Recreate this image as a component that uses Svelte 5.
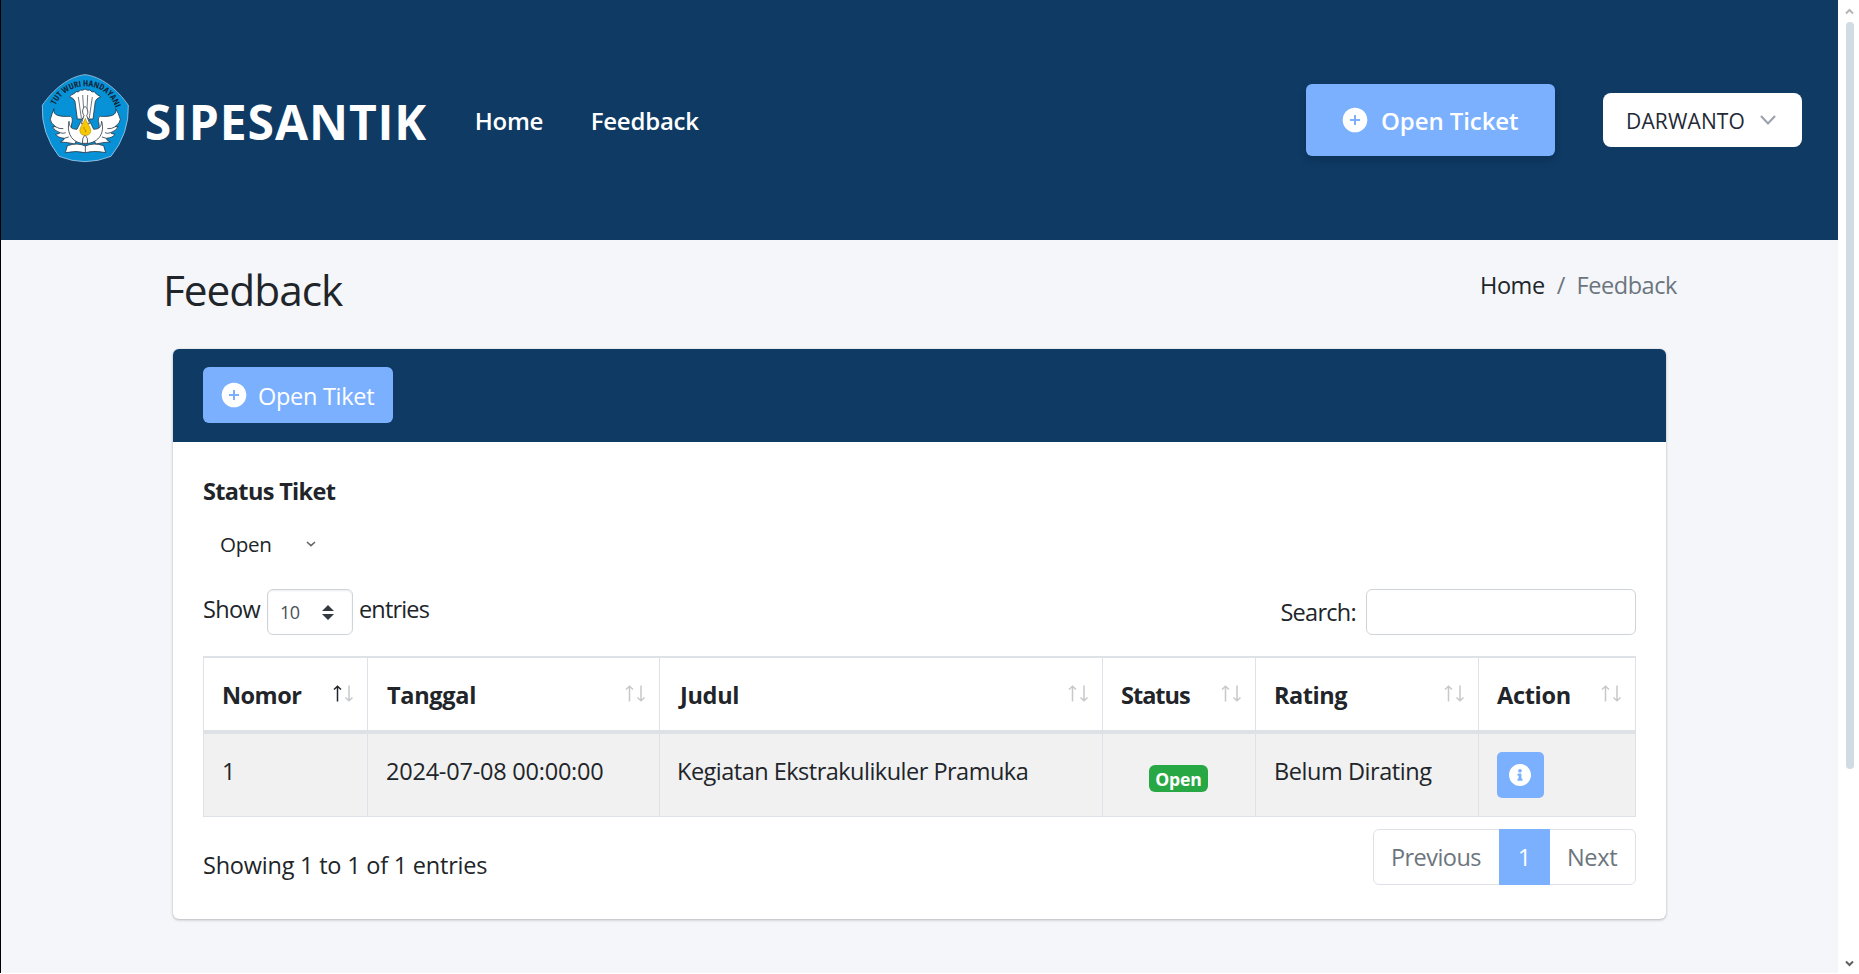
<script>
  const columns = [
    { key: 'nomor', label: 'Nomor' },
    { key: 'tanggal', label: 'Tanggal' },
    { key: 'judul', label: 'Judul' },
    { key: 'status', label: 'Status' },
    { key: 'rating', label: 'Rating' },
    { key: 'action', label: 'Action' }
  ];
  const rows = [
    {
      nomor: '1',
      tanggal: '2024-07-08 00:00:00',
      judul: 'Kegiatan Ekstrakulikuler Pramuka',
      status: 'Open',
      rating: 'Belum Dirating'
    }
  ];
  let sorted = $state('nomor');
</script>

{#snippet plus()}
  <svg class="plus" viewBox="0 0 26 26" aria-hidden="true">
    <circle cx="13" cy="13" r="12.3" fill="#fff" />
    <path d="M13 8v10M8 13h10" stroke="#7bb0ff" stroke-width="2" />
  </svg>
{/snippet}

<div class="window">
  <div class="page">
    <nav class="navbar">
      <svg class="logo" viewBox="120 68 272 272" aria-hidden="true">
        <path
          d="M255 73C302 78 352 116 385 165Q388 250 333 318Q255 350 177 318Q123 250 127 165C160 116 208 78 255 73Z"
          fill="#0792d8" stroke="#a4c8e4" stroke-width="2.5" />
        <path id="arc" d="M167 165C184 127 218 108 258 108C300 108 331 132 346 170" fill="none" />
        <text class="motto"><textPath href="#arc" textLength="232" lengthAdjust="spacingAndGlyphs">TUT WURI HANDAYANI</textPath></text>
        <g fill="#fff" stroke="#27343f" stroke-width="2.4" stroke-linejoin="round">
          <path d="M209 139C216 130 224 132 228 124Q236 128 241 119Q248 122 255 116Q262 122 270 119Q275 128 283 124Q287 132 302 139Q288 145 286 153L279 206H232L225 153Q222 144 209 139Z" />
          <path d="M235 140L244 203M248 134L251 178M263 134L261 178M277 140L268 203" fill="none" stroke-width="2" />
          <path d="M162 175C157 197 180 199 211 198Q219 200 217 213C210 231 218 253 233 265L224 281Q205 276 181 275Q194 269 193 264Q173 262 167 252Q180 250 180 247Q160 240 158 229L167 229Q151 218 151 207Q156 189 162 175Z" />
          <path d="M347 175C352 197 330 199 301 198Q293 200 295 213C302 231 294 253 279 265L288 281Q307 276 331 275Q318 269 319 264Q339 262 345 252Q332 250 332 247Q352 240 354 229L345 229Q361 218 361 207Q356 189 347 175Z" />
          <path d="M207 213C201 239 208 272 244 279Q255 283 266 279C304 272 313 239 305 213C303 233 297 236 281 237L265 204H247L231 237C215 236 209 233 207 213Z" />
          <path d="M166 229Q176 236 190 235M180 247Q190 251 197 247M193 264L206 260M346 229Q336 236 322 235M332 247Q322 251 315 247M319 264L306 260" fill="none" />
          <path d="M255 168C246 176 246 188 252 195L244 220H269L260 195C266 188 264 176 255 168Z" />
          <path d="M247 279Q246 263 255 253Q265 263 263 279Z" />
          <path d="M202 286Q232 276 256 287Q281 276 311 286L317 307Q283 300 256 307Q229 300 196 307ZM256 287V307" />
        </g>
        <path d="M256 204C250 221 237 233 240 244C243 259 270 259 272 244C274 233 262 221 256 204Z" fill="#f9c800" stroke="#a58a18" stroke-width="1.8" />
        <path d="M252 230C250 239 260 236 256 246" fill="none" stroke="#7d6818" stroke-width="2" />
      </svg>
      <a class="brand" href="#home">SIPESANTIK</a>
      <div class="links">
        <a href="#home">Home</a>
        <a href="#feedback">Feedback</a>
      </div>
      <button class="ticket">{@render plus()}<span>Open Ticket</span></button>
      <button class="user">
        <span>DARWANTO</span>
        <svg viewBox="0 0 18 12" aria-hidden="true"><path d="M2 2l7 7.5L16 2" /></svg>
      </button>
    </nav>

    <header class="heading">
      <h1>Feedback</h1>
      <div class="crumbs">
        <a href="#home">Home</a><i>/</i><span>Feedback</span>
      </div>
    </header>

    <section class="card">
      <div class="card-top">
        <button class="new">{@render plus()}<span>Open Tiket</span></button>
      </div>
      <div class="card-body">
        <b class="filter-label">Status Tiket</b>
        <div class="filter">
          <span>Open</span>
          <svg viewBox="0 0 10 6" aria-hidden="true"><path d="M1 1l4 3.6L9 1" /></svg>
        </div>

        <div class="controls">
          <div class="length">
            <span class="show">Show</span>
            <div class="select">
              <span>10</span>
              <svg viewBox="0 0 12 15" aria-hidden="true"><path d="M6 0l6 6H0zM6 15l6-6H0z" /></svg>
            </div>
            <span class="entries">entries</span>
          </div>
          <label class="search"><span>Search:</span><input type="text" /></label>
        </div>

        <table>
          <thead>
            <tr>
              {#each columns as col}
                <th class={col.key} onclick={() => (sorted = col.key)}>
                  <span>{col.label}</span>
                  <svg class="sort" class:asc={sorted === col.key} viewBox="0 0 20 17" aria-hidden="true">
                    <path class="up" d="M4.5 16.5V1.5M1 4.5L4.5 1.2L8 4.5" />
                    <path d="M16 .5V15.5M12.5 12.5L16 15.8L19.5 12.5" />
                  </svg>
                </th>
              {/each}
            </tr>
          </thead>
          <tbody>
            {#each rows as row}
              <tr>
                <td class="nomor">{row.nomor}</td>
                <td class="tanggal">{row.tanggal}</td>
                <td class="judul">{row.judul}</td>
                <td class="status"><span class="badge">{row.status}</span></td>
                <td class="rating">{row.rating}</td>
                <td class="action">
                  <button class="info" aria-label="Detail">
                    <svg viewBox="8 8 496 496" aria-hidden="true">
                      <path d="M256 8C119.043 8 8 119.083 8 256c0 136.997 111.043 248 248 248s248-111.003 248-248C504 119.083 392.957 8 256 8zm0 110c23.196 0 42 18.804 42 42s-18.804 42-42 42-42-18.804-42-42 18.804-42 42-42zm56 254c0 6.627-5.373 12-12 12h-88c-6.627 0-12-5.373-12-12v-24c0-6.627 5.373-12 12-12h12v-64h-12c-6.627 0-12-5.373-12-12v-24c0-6.627 5.373-12 12-12h64c6.627 0 12 5.373 12 12v100h12c6.627 0 12 5.373 12 12v24z" />
                    </svg>
                  </button>
                </td>
              </tr>
            {/each}
          </tbody>
        </table>

        <div class="footer">
          <span class="summary">Showing 1 to 1 of 1 entries</span>
          <div class="pages">
            <span class="prev">Previous</span>
            <span class="current">1</span>
            <span class="next">Next</span>
          </div>
        </div>
      </div>
    </section>
  </div>

  <div class="scrollbar">
    <svg viewBox="0 0 9 7" aria-hidden="true"><path d="M1 5.5L4.5 2L8 5.5" stroke="#b5b5b5" /></svg>
    <div class="thumb"></div>
    <svg class="down" viewBox="0 0 9 7" aria-hidden="true"><path d="M1 1.5L4.5 5L8 1.5" stroke="#606060" /></svg>
  </div>
</div>

<style>
  :global(body) {
    margin: 0;
    background: #fff;
    overflow: hidden;
  }
  * {
    box-sizing: border-box;
  }
  .window {
    display: flex;
    width: 1859px;
    height: 973px;
    border-left: 1px solid #000;
    font: 400 23.5px/36px 'Open Sans', 'Noto Sans', sans-serif;
    color: #212529;
    white-space: nowrap;
  }
  .page {
    width: 1837px;
    background: #f4f6fa;
  }
  a {
    color: inherit;
    text-decoration: none;
  }
  button {
    display: flex;
    align-items: center;
    border: 0;
    padding: 0;
    font: inherit;
    color: #fff;
    background: #7bb0ff;
  }
  svg {
    display: block;
    flex: none;
  }

  .navbar {
    display: flex;
    align-items: center;
    height: 240px;
    padding: 0 36px 0 39px;
    background: #0e3a64;
    color: #fff;
    font-size: 24px;
    font-weight: 600;
  }
  .logo {
    width: 90.67px;
    height: 90.67px;
    margin-bottom: 4px;
  }
  .motto {
    font: 700 25px 'Open Sans', sans-serif;
    font-stretch: 75%;
    fill: #10283c;
  }
  .brand {
    margin: 4px 0 0 14px;
    width: 330px;
    font-size: 48px;
    line-height: 64px;
    font-weight: 700;
    letter-spacing: 0.9px;
  }
  .links {
    display: flex;
    gap: 47.5px;
    padding-top: 2px;
    flex: 1;
    letter-spacing: -0.22px;
  }
  .ticket {
    width: 249px;
    height: 72px;
    padding-left: 36px;
    border-radius: 6px;
    box-shadow: 0 4px 8px rgba(0, 0, 0, 0.16);
    letter-spacing: -0.08px;
  }
  .plus {
    width: 26px;
    height: 26px;
  }
  .ticket span {
    margin: 2px 0 0 13px;
  }
  .user {
    width: 199px;
    height: 54px;
    margin-left: 48px;
    padding-left: 23px;
    border-radius: 8px;
    background: #fff;
    color: #1f2937;
    font-size: 21px;
    font-weight: 400;
    letter-spacing: 0.15px;
  }
  .user span {
    margin-top: 2px;
  }
  .user svg {
    width: 18px;
    height: 12px;
    margin: 0 0 0 14px;
  }
  .user path {
    fill: none;
    stroke: #9ca3af;
    stroke-width: 2.2;
  }

  .heading {
    display: flex;
    justify-content: space-between;
    height: 109px;
    padding: 24px 161px 0 162px;
  }
  h1 {
    margin: 0;
    font-size: 42.4px;
    line-height: 52px;
    font-weight: 400;
    letter-spacing: -1.04px;
  }
  .crumbs {
    display: flex;
    padding-top: 3px;
    letter-spacing: -0.42px;
    color: #6c757d;
  }
  .crumbs a {
    color: #212529;
  }
  .crumbs i {
    margin: 0 11.5px 0 12px;
    font-style: normal;
  }

  .card {
    width: 1493px;
    height: 570px;
    margin-left: 172px;
    border-radius: 6px;
    background: #fff;
    box-shadow: 0 0 1px rgba(0, 0, 0, 0.125), 0 1px 3px rgba(0, 0, 0, 0.25);
  }
  .card-top {
    height: 93px;
    padding: 18px 30px;
    border-radius: 6px 6px 0 0;
    background: #0e3a64;
  }
  .new {
    width: 190px;
    height: 56px;
    padding-left: 18px;
    border-radius: 6px;
    letter-spacing: -0.29px;
  }
  .new span {
    margin: 2px 0 0 11px;
  }
  .card-body {
    padding: 31px 30px 0;
  }
  .filter-label {
    display: block;
    letter-spacing: -0.66px;
  }
  .filter {
    display: flex;
    align-items: center;
    height: 36px;
    margin-top: 17px;
    padding-left: 17px;
    font-size: 20.6px;
    letter-spacing: -0.34px;
  }
  .filter span {
    width: 86px;
  }
  .filter svg {
    width: 10px;
    height: 6px;
  }
  .filter path {
    fill: none;
    stroke: #666;
    stroke-width: 1.6;
  }

  .controls {
    display: flex;
    justify-content: space-between;
    height: 46px;
    margin-top: 27px;
  }
  .length {
    display: flex;
  }
  .show {
    width: 64px;
    margin-top: 2px;
    letter-spacing: -0.67px;
  }
  .select {
    display: flex;
    align-items: center;
    width: 86px;
    height: 46px;
    padding-left: 12px;
    border: 1px solid #ced4da;
    border-radius: 6px;
    box-shadow: inset 0 1px 2px rgba(0, 0, 0, 0.075);
    font-size: 18px;
    letter-spacing: -0.6px;
    color: #495057;
  }
  .select span {
    width: 42px;
  }
  .select svg {
    width: 12px;
    height: 15px;
    fill: #343a40;
  }
  .entries {
    margin: 2px 0 0 6px;
    letter-spacing: -0.83px;
  }
  .search {
    display: flex;
    align-items: center;
    letter-spacing: -0.72px;
  }
  .search input {
    width: 270px;
    height: 46px;
    margin-left: 10px;
    border: 1px solid #ced4da;
    border-radius: 6px;
    background: #fff;
    outline: 0;
  }

  table {
    width: 1433px;
    margin-top: 21px;
    border-collapse: separate;
    border-spacing: 0;
    table-layout: fixed;
  }
  th,
  td {
    padding: 19px 0 0 18px;
    border-left: 1px solid #dee2e6;
    text-align: left;
    vertical-align: top;
  }
  th {
    position: relative;
    height: 78px;
    border-top: 2px solid #dee2e6;
    border-bottom: 4px solid #dee2e6;
    font-weight: 700;
    letter-spacing: -0.3px;
  }
  td {
    height: 83px;
    border-bottom: 1px solid #dee2e6;
    background: #f1f1f1;
    letter-spacing: -0.22px;
  }
  th:last-child,
  td:last-child {
    border-right: 1px solid #dee2e6;
  }
  th.nomor {
    width: 164px;
    letter-spacing: -0.53px;
  }
  th.tanggal {
    width: 292px;
    padding-left: 19px;
  }
  th.judul {
    width: 443px;
    padding-left: 20px;
  }
  th.status {
    width: 153px;
    letter-spacing: -1px;
  }
  th.rating {
    width: 223px;
    letter-spacing: -0.46px;
  }
  th.action {
    width: 158px;
  }
  td.judul {
    padding-left: 17px;
    letter-spacing: -0.51px;
  }
  td.rating {
    letter-spacing: -0.44px;
  }
  td.status {
    padding: 31px 0 0 46px;
  }
  td.action {
    padding-top: 18px;
  }
  .sort {
    position: absolute;
    top: 27px;
    right: 14px;
    width: 20px;
    height: 17px;
  }
  .sort path {
    fill: none;
    stroke: #c6c8ca;
    stroke-width: 1.5;
  }
  .sort.asc .up {
    stroke: #212529;
  }
  .badge {
    display: block;
    width: 59px;
    height: 27px;
    border-radius: 6px;
    background: #28a745;
    color: #fff;
    font-size: 17.6px;
    line-height: 28px;
    font-weight: 700;
    letter-spacing: -0.15px;
    text-align: center;
  }
  .info {
    width: 47px;
    height: 46px;
    padding-left: 12px;
    border-radius: 5px;
  }
  .info svg {
    width: 22px;
    height: 22px;
    fill: #fff;
  }

  .footer {
    display: flex;
    justify-content: space-between;
    padding-top: 12px;
  }
  .summary {
    margin-top: 18px;
    letter-spacing: -0.22px;
  }
  .pages {
    display: flex;
    width: 263px;
    height: 56px;
    border: 1px solid #dee2e6;
    border-radius: 6px;
    line-height: 55px;
    color: #6c757d;
  }
  .prev {
    width: 125px;
    padding-left: 17px;
    letter-spacing: -0.56px;
  }
  .current {
    width: 51px;
    height: 56px;
    margin-top: -1px;
    padding-top: 1px;
    background: #7bb0ff;
    color: #fff;
    text-align: center;
  }
  .next {
    padding-left: 17px;
    letter-spacing: -0.35px;
  }

  .scrollbar {
    display: flex;
    flex-direction: column;
    align-items: center;
    width: 21px;
    padding: 8px 0 6px 2px;
    background: #fff;
  }
  .scrollbar svg {
    width: 9px;
    height: 7px;
  }
  .scrollbar path {
    fill: none;
    stroke-width: 2;
  }
  .thumb {
    width: 8px;
    height: 747px;
    margin-top: 7px;
    border-radius: 4px;
    background: #d0dbe4;
  }
  .down {
    margin-top: auto;
  }
</style>
